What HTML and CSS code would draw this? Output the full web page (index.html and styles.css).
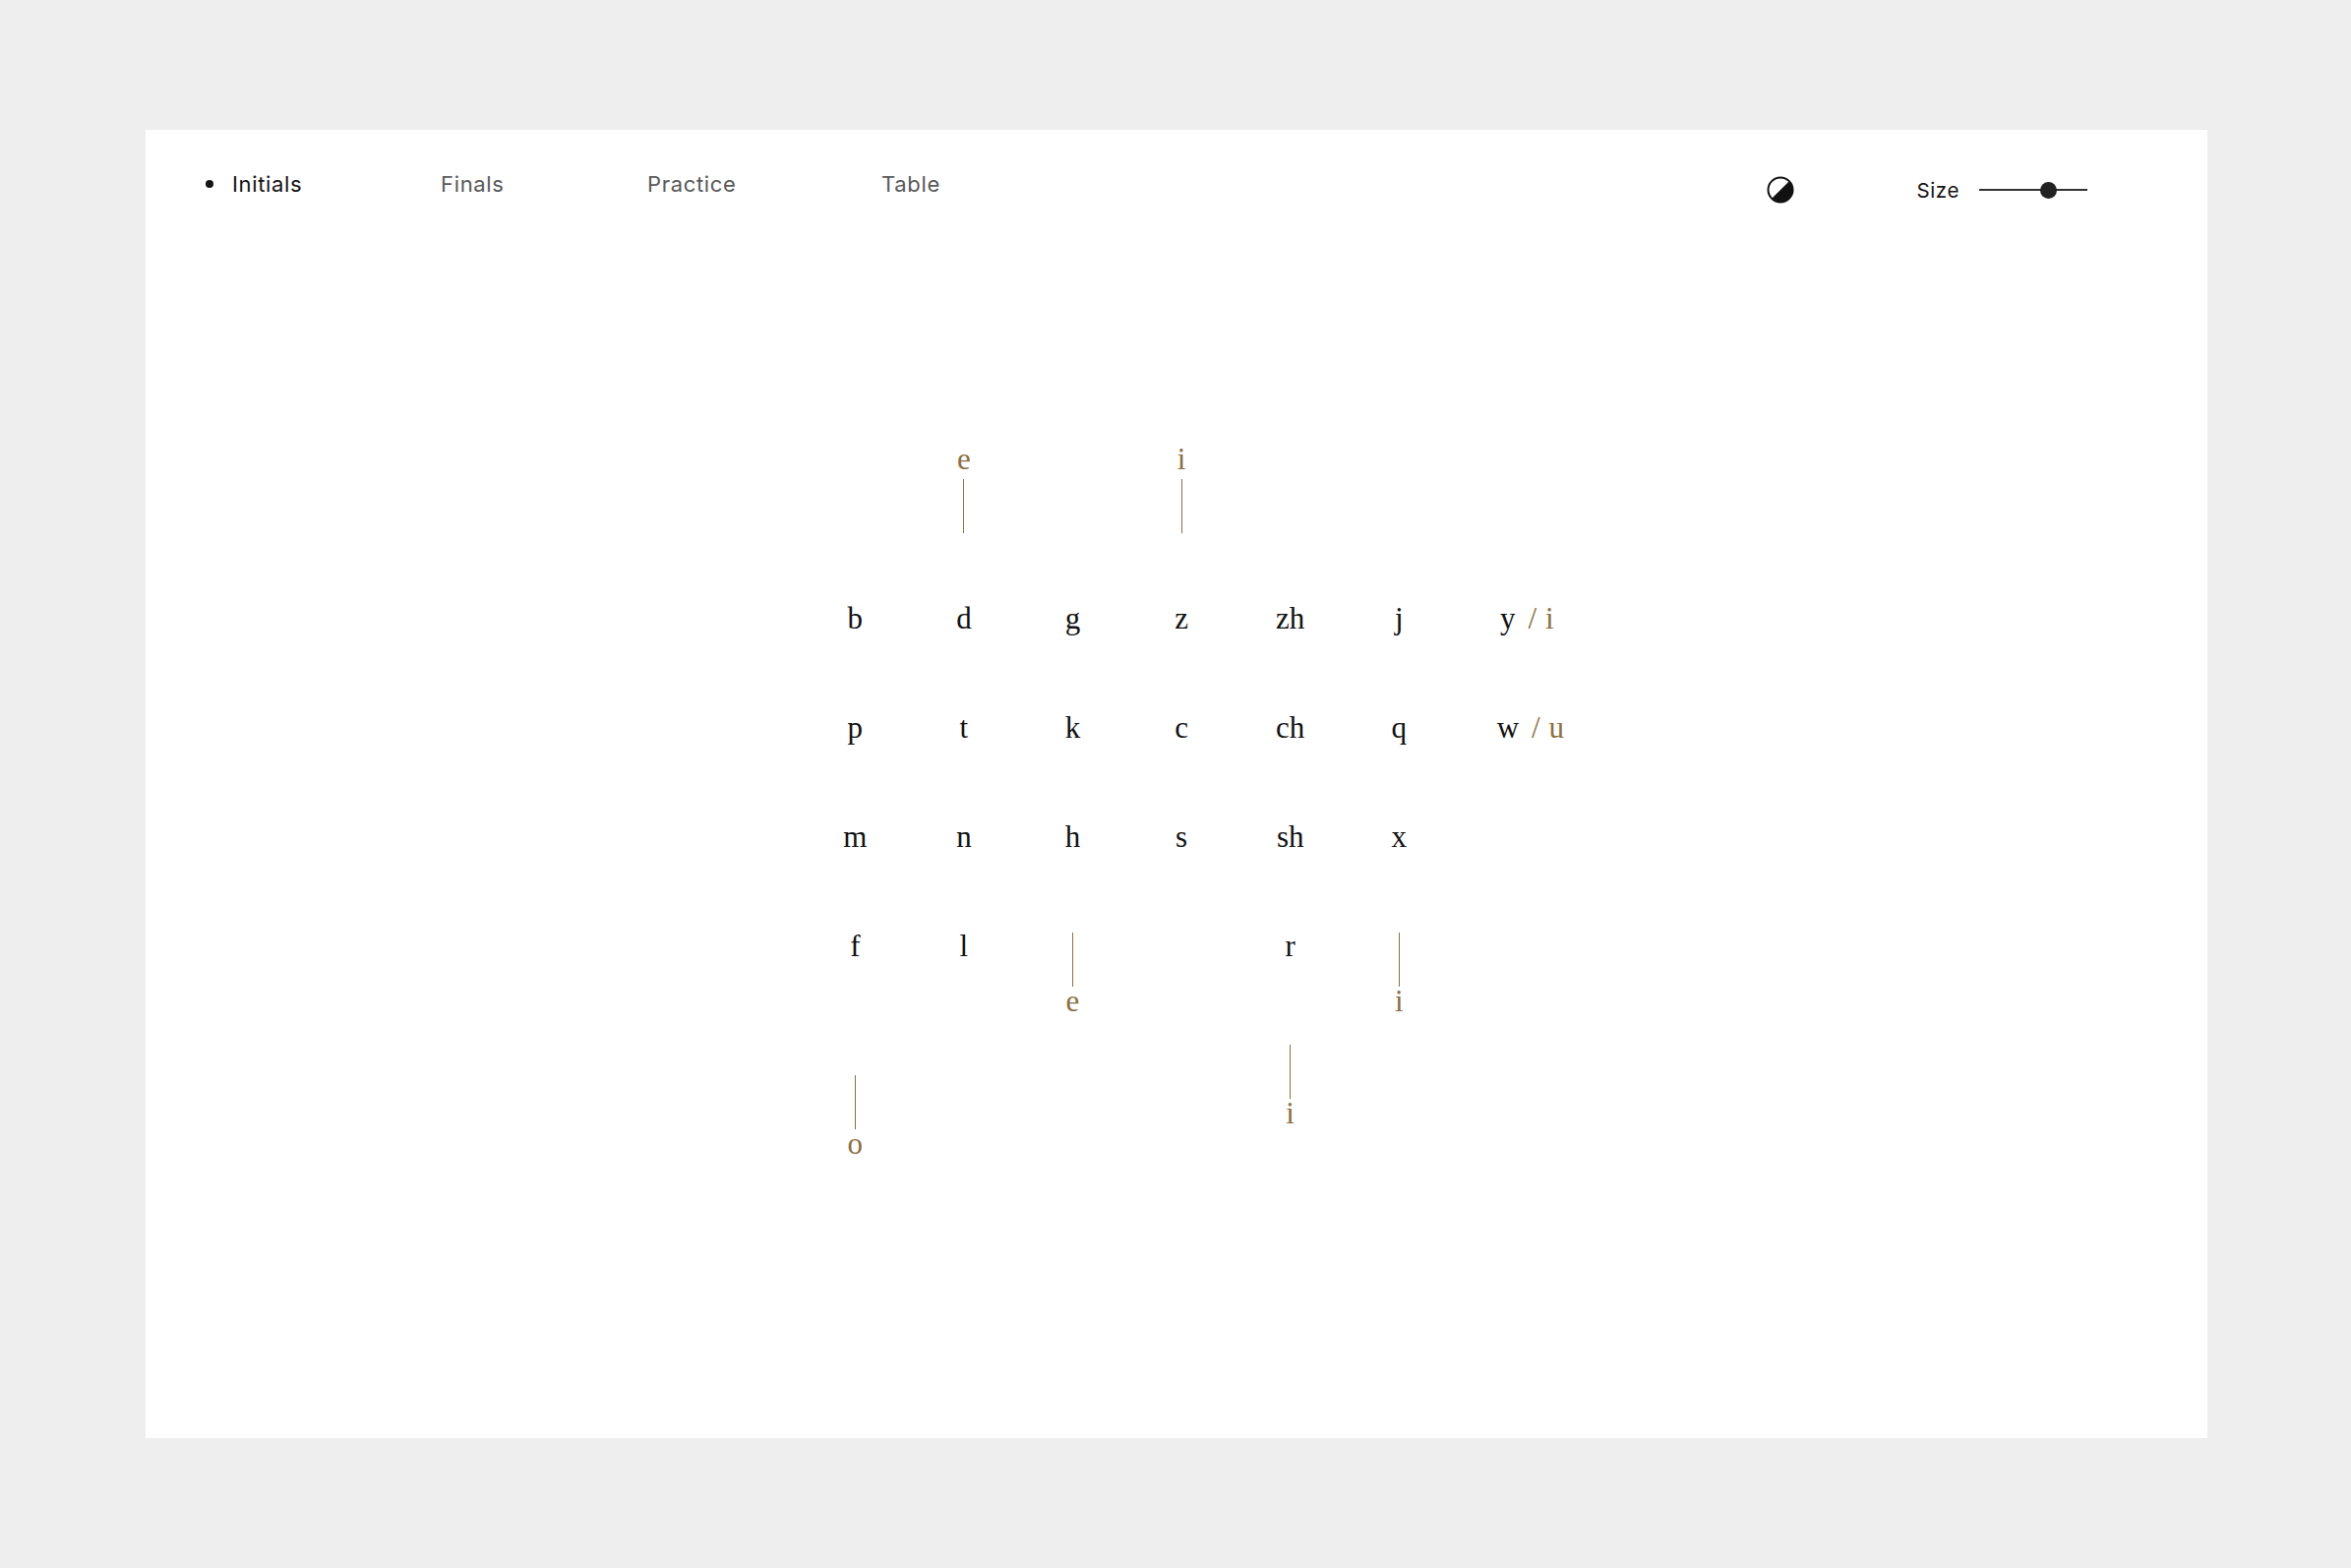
FILE: index.html
```html
<!DOCTYPE html>
<html lang="en">
<head>
<meta charset="utf-8">
<title>Initials</title>
<link rel="stylesheet" href="styles.css">
</head>
<body>
<div class="page">
  <div class="card">
    <header class="top">
      <nav class="nav">
        <a class="nav-item active"><span class="dot"></span>Initials</a>
        <a class="nav-item">Finals</a>
        <a class="nav-item">Practice</a>
        <a class="nav-item">Table</a>
      </nav>
      <div class="controls">
        <svg class="contrast" viewBox="0 0 28 28" aria-hidden="true">
          <circle cx="14" cy="14" r="12.5" fill="#fff" stroke="#111" stroke-width="2"/>
          <path d="M22.84 5.16 A12.5 12.5 0 0 1 5.16 22.84 Z" fill="#111"/>
        </svg>
        <span class="size-label">Size</span>
        <div class="slider"><div class="track"></div><div class="knob"></div></div>
      </div>
    </header>
    <main class="chart">
      <div class="grid">
        <!-- row 1 -->
        <div class="cell">b</div>
        <div class="cell">d<div class="stem up"><span class="v">e</span><span class="bar"></span></div></div>
        <div class="cell">g</div>
        <div class="cell">z<div class="stem up"><span class="v">i</span><span class="bar"></span></div></div>
        <div class="cell">zh</div>
        <div class="cell">j</div>
        <div class="cell alt"><span class="c">y</span><span class="suf"><span class="suf-in">/ i</span></span></div>
        <!-- row 2 -->
        <div class="cell">p</div>
        <div class="cell">t</div>
        <div class="cell">k</div>
        <div class="cell">c</div>
        <div class="cell">ch</div>
        <div class="cell">q</div>
        <div class="cell alt"><span class="c">w</span><span class="suf"><span class="suf-in">/ u</span></span></div>
        <!-- row 3 -->
        <div class="cell">m</div>
        <div class="cell">n</div>
        <div class="cell">h</div>
        <div class="cell">s</div>
        <div class="cell">sh</div>
        <div class="cell">x</div>
        <div class="cell"></div>
        <!-- row 4 -->
        <div class="cell">f<div class="stem down d3"><span class="bar"></span><span class="v">o</span></div></div>
        <div class="cell">l</div>
        <div class="cell"><div class="stem down d1"><span class="bar"></span><span class="v">e</span></div></div>
        <div class="cell"></div>
        <div class="cell">r<div class="stem down d2"><span class="bar"></span><span class="v">i</span></div></div>
        <div class="cell"><div class="stem down d1"><span class="bar"></span><span class="v">i</span></div></div>
        <div class="cell"></div>
      </div>
    </main>
  </div>
</div>
</body>
</html>
```

FILE: styles.css
```css
html, body {
  margin: 0;
  padding: 0;
}

body {
  background: #eeeeee;
  width: 2390px;
  height: 1594px;
  overflow: hidden;
}

.page {
  padding: 132px 0 0 148px;
}

.card {
  width: 2096px;
  height: 1330px;
  background: #ffffff;
  padding-top: 34px;
  box-sizing: border-box;
}

/* ---------- header ---------- */
.top {
  display: flex;
  justify-content: space-between;
  align-items: center;
  height: 54px;
  padding: 0 122px 0 61px;
}

.nav {
  align-self: flex-start;
  display: grid;
  grid-template-columns: 239px 210px 238px auto;
  font-family: Inter, "Liberation Sans", sans-serif;
  font-size: 22px;
  line-height: 42px;
  letter-spacing: 0.03em;
}

.nav-item {
  display: flex;
  align-items: center;
  color: #595959;
  text-decoration: none;
}

.nav-item.active {
  color: #141414;
}

.dot {
  width: 8px;
  height: 8px;
  border-radius: 50%;
  background: #141414;
  margin-right: 19px;
  flex: none;
}

.controls {
  display: flex;
  align-items: center;
}

.contrast {
  width: 28px;
  height: 28px;
  margin-right: 124px;
  display: block;
}

.size-label {
  font-family: Inter, "Liberation Sans", sans-serif;
  font-size: 20.5px;
  letter-spacing: 0.03em;
  color: #141414;
  margin-right: 20px;
}

.slider {
  position: relative;
  width: 110px;
  height: 17px;
  display: flex;
  align-items: center;
}

.track {
  width: 100%;
  height: 2px;
  background: #333333;
}

.knob {
  position: absolute;
  left: 61.5px;
  top: 0;
  width: 17px;
  height: 17px;
  border-radius: 50%;
  background: #222222;
}

/* ---------- chart ---------- */
.chart {
  margin-top: 353px;
  margin-left: 666px;
}

.grid {
  display: grid;
  grid-template-columns: repeat(7, 110.6px);
  grid-template-rows: repeat(4, 111px);
  font-family: "Liberation Serif", "Times New Roman", serif;
  font-size: 31px;
  color: #121212;
}

.cell {
  position: relative;
  text-align: center;
  line-height: 111px;
  white-space: nowrap;
}

.cell.alt {
  display: flex;
  justify-content: center;
}

.suf {
  flex: 0 0 0;
  min-width: 0;
  color: #8b6f42;
  white-space: nowrap;
  text-align: left;
}

.suf-in {
  margin-left: 13px;
  word-spacing: 1px;
}

.stem {
  position: absolute;
  left: calc(50% - 20.5px);
  width: 41px;
  display: flex;
  flex-direction: column;
  align-items: center;
  color: #8b6f42;
  line-height: 30px;
}

.stem .v {
  display: block;
  height: 30px;
}

.stem .bar {
  display: block;
  width: 1px;
  height: 55px;
  background: #8b6f42;
}

.stem.up {
  top: -121px;
  gap: 5px;
}

.stem.down {
  gap: 0;
}

.stem.d1 {
  top: 42px;
}

.stem.d2 {
  top: 156px;
}

.stem.d3 {
  top: 187px;
}
```
